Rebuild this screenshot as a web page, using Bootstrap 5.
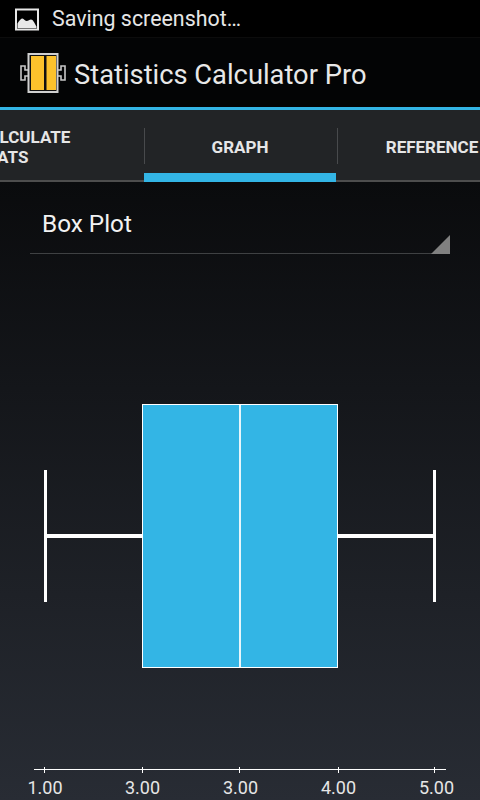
<!DOCTYPE html>
<html lang="en">
<head>
<meta charset="utf-8">
<title>Statistics Calculator Pro</title>
<link rel="stylesheet" href="https://cdn.jsdelivr.net/npm/bootstrap@5.3.0/dist/css/bootstrap.min.css">
<style>
html,body{height:800px;overflow:hidden;background:#000;}
body{font-family:Roboto,"Liberation Sans",sans-serif;color:#fff;}
.shell{width:480px;height:800px;overflow:hidden;}
.statusbar{height:38px;background:#000;border-bottom:1px solid #0c0c0c;padding-left:15px;padding-top:2px;gap:13px;font-size:21.4px;color:#e6e6e6;flex:none;}
.actionbar{height:69px;background:#030405;padding-left:20px;gap:8px;flex:none;}
.apptitle{font-size:27.3px;color:#e8e8e8;line-height:1;padding-top:7px;}
.bluerule{height:3px;background:#33b5e5;flex:none;}
.tabbar{height:72px;width:576px;margin-left:-48px;background:#222426;flex:none;}
.tabcell{width:192px;height:72px;border-bottom:2px solid #4d4d4d;font-size:17px;font-weight:700;color:#e6e6e6;line-height:20px;}
.tabcell.current{border-bottom:9px solid #33b5e5;}
.tabsep{position:absolute;right:-1px;top:18px;height:36px;width:1px;background:#484a4c;}
.tabcell.current .tabsep{right:-2px;}
.tabtext{padding-top:4px;}
.tabtext-first{padding-left:25px;padding-top:4px;width:100%;}
.tabbar .current .tabtext{padding-top:11px;}
.plotarea{flex:1 1 auto;background:linear-gradient(180deg,#0a0b0d 0%,#282c34 100%);min-height:0;}
.spinnerbox{height:72px;margin:0 30px;border-bottom:1px solid #3f4143;position:relative;padding-left:12px;font-size:24.3px;color:#f2f2f2;padding-top:26px;flex:none;}
.spinnertext{line-height:32px;}
.spinnerarrow{position:absolute;right:0;bottom:-1px;width:19px;height:19px;}
.chart{display:block;}
.axisnum{font-family:Roboto,"Liberation Sans",sans-serif;font-size:18px;fill:#e6e6e6;text-anchor:middle;}
</style>
</head>
<body>
<div class="shell d-flex flex-column">
  <div class="statusbar d-flex align-items-center">
    <svg width="24" height="24" viewBox="0 0 24 24" aria-hidden="true"><rect x="1" y="1.500" width="22" height="20" fill="#000" stroke="#e8e8e8" stroke-width="2"/><path d="M2.500 20V15.500C4 12.500 6 10.500 7.500 10.500C9 10.500 9.500 13 11.500 13C13.500 13 14.500 11.500 16 11.500C18 11.500 19.500 15 21.500 18.500V20Z" fill="#e8e8e8"/></svg>
    <span>Saving screenshot…</span>
  </div>
  <div class="actionbar d-flex align-items-center">
    <svg width="46" height="40" viewBox="0 0 46 40" aria-hidden="true">
      <path d="M8 17H5V13H1V27H5V23H8M38 17H41V13H45V27H41V23H38" fill="none" stroke="#c8c8c8" stroke-width="1.600"/>
      <rect x="8.500" y="1" width="29" height="38" fill="#111" stroke="#d0d0d0" stroke-width="2"/>
      <rect x="11" y="3" width="13" height="34" fill="#fcc22c"/>
      <rect x="26.500" y="3" width="9.500" height="34" fill="#fcc22c"/>
    </svg>
    <span class="apptitle">Statistics Calculator Pro</span>
  </div>
  <div class="bluerule"></div>
  <div class="tabbar d-flex">
    <div class="tabcell position-relative d-flex align-items-center"><div class="tabtext-first">CALCULATE<br>STATS</div><span class="tabsep"></span></div>
    <div class="tabcell current position-relative d-flex align-items-center justify-content-center"><div class="tabtext">GRAPH</div><span class="tabsep"></span></div>
    <div class="tabcell position-relative d-flex align-items-center justify-content-center"><div class="tabtext">REFERENCE</div></div>
  </div>
  <div class="plotarea d-flex flex-column">
    <div class="spinnerbox">
      <div class="spinnertext">Box Plot</div>
      <svg class="spinnerarrow" viewBox="0 0 19 19" aria-hidden="true"><path d="M19 0V19H0Z" fill="#808080"/></svg>
    </div>
    <svg class="chart" width="480" height="546" viewBox="0 254 480 546" aria-label="Box plot">
      <g fill="#fff">
        <rect x="44" y="470" width="3" height="132"/>
        <rect x="433" y="470" width="3" height="132"/>
        <rect x="46" y="534" width="97" height="4"/>
        <rect x="337" y="534" width="97" height="4"/>
      </g>
      <rect x="142.500" y="404.500" width="195" height="263" fill="#33b5e5" stroke="#fff" stroke-width="1"/>
      <rect x="239" y="405" width="2" height="262" fill="#e8f6fb"/>
      <g stroke="#fff" stroke-width="1">
        <line x1="34" y1="769.500" x2="446" y2="769.500"/>
        <line x1="44.500" y1="767" x2="44.500" y2="773"/>
        <line x1="142.500" y1="767" x2="142.500" y2="773"/>
        <line x1="239.500" y1="767" x2="239.500" y2="773"/>
        <line x1="338.500" y1="767" x2="338.500" y2="773"/>
        <line x1="434.500" y1="767" x2="434.500" y2="773"/>
      </g>
      <text class="axisnum" x="45" y="794">1.00</text>
      <text class="axisnum" x="142.500" y="794">3.00</text>
      <text class="axisnum" x="240.500" y="794">3.00</text>
      <text class="axisnum" x="338.500" y="794">4.00</text>
      <text class="axisnum" x="436.500" y="794">5.00</text>
    </svg>
  </div>
</div>
<script src="https://cdn.jsdelivr.net/npm/bootstrap@5.3.0/dist/js/bootstrap.bundle.min.js"></script>
</body>
</html>
